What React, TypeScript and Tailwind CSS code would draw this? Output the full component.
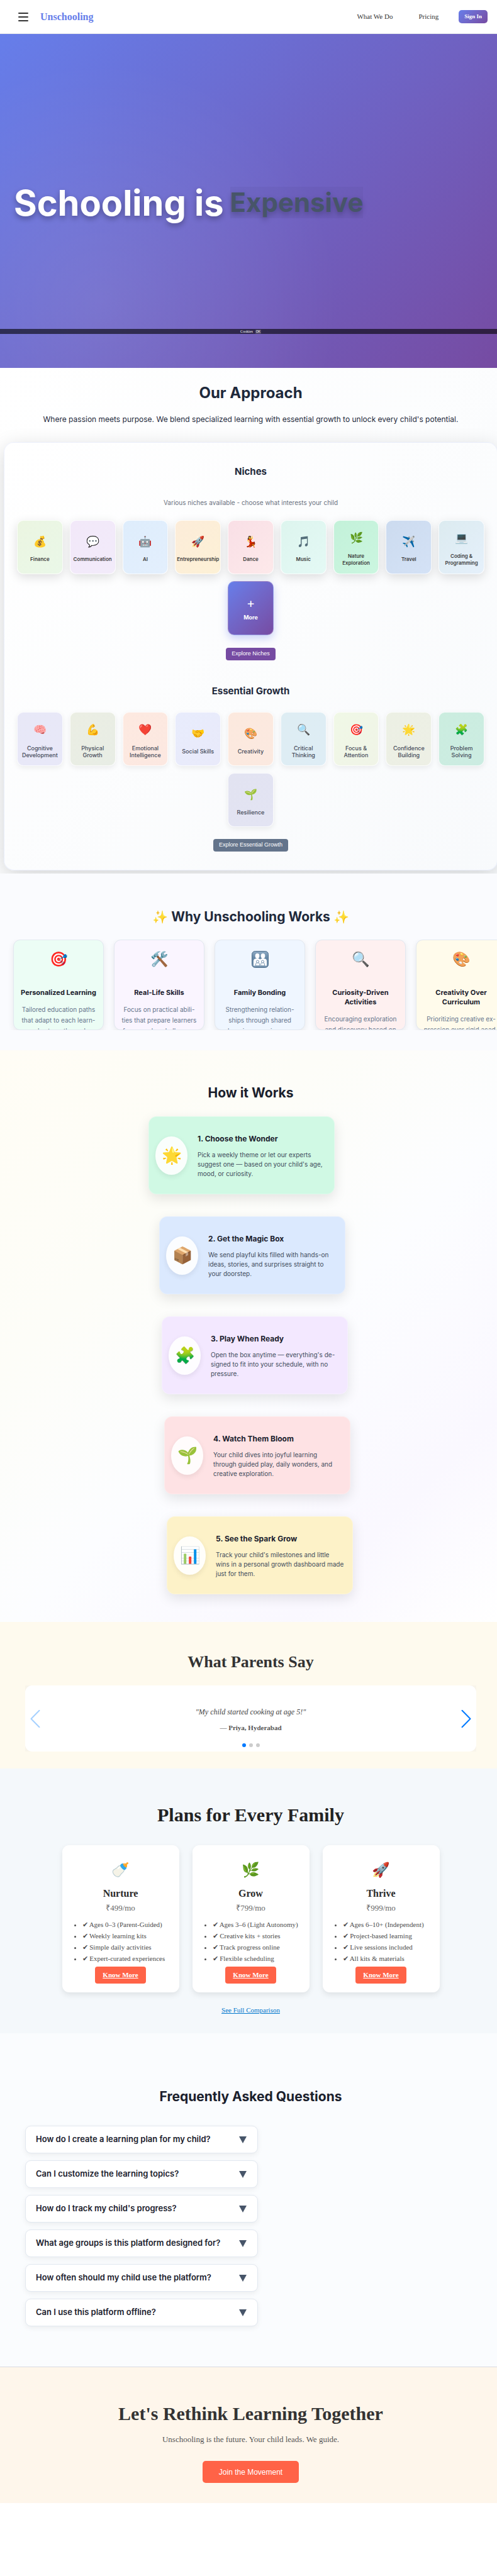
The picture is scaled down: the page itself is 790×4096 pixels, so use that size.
import { useState } from "react";
import type { ReactNode } from "react";

type Tile = { icon: string; label: string; bg: string };

const niches: Tile[] = [
  { icon: "💰", label: "Finance", bg: "from-[#ebf5e1] to-[#eaf8e8]" },
  { icon: "💬", label: "Communication", bg: "from-[#f2e8f9] to-[#f2ebfa]" },
  { icon: "🤖", label: "AI", bg: "from-[#deedfc] to-[#e3effd]" },
  { icon: "🚀", label: "Entrepreneurship", bg: "from-[#fcecd9] to-[#fdf1d6]" },
  { icon: "💃", label: "Dance", bg: "from-[#f9dfe6] to-[#fde9ea]" },
  { icon: "🎵", label: "Music", bg: "from-[#ddf5ee] to-[#e4f9f5]" },
  { icon: "🌿", label: "Nature\nExploration", bg: "from-[#c3f1d9] to-[#cbf6e0]" },
  { icon: "✈️", label: "Travel", bg: "from-[#ccdbef] to-[#d4e2f6]" },
  { icon: "💻", label: "Coding &\nProgramming", bg: "from-[#dcebf0] to-[#e5f0fb]" },
];

const growth: Tile[] = [
  { icon: "🧠", label: "Cognitive\nDevelopment", bg: "from-[#e8e8f7] to-[#e8e8f8]" },
  { icon: "💪", label: "Physical\nGrowth", bg: "from-[#ebeee3] to-[#e8ede5]" },
  { icon: "❤️", label: "Emotional\nIntelligence", bg: "from-[#fde9e0] to-[#fce8e1]" },
  { icon: "🤝", label: "Social Skills", bg: "from-[#e8ecfc] to-[#e9eafa]" },
  { icon: "🎨", label: "Creativity", bg: "from-[#fce9de] to-[#fbe9e0]" },
  { icon: "🔍", label: "Critical\nThinking", bg: "from-[#deedf3] to-[#deedf5]" },
  { icon: "🎯", label: "Focus &\nAttention", bg: "from-[#f0f8e6] to-[#f0f4e7]" },
  { icon: "🌟", label: "Confidence\nBuilding", bg: "from-[#ecf0e4] to-[#edefe5]" },
  { icon: "🧩", label: "Problem\nSolving", bg: "from-[#cbeddf] to-[#ccece2]" },
  { icon: "🌱", label: "Resilience", bg: "from-[#e2e3f1] to-[#e3e4f3]" },
];

function FamilyIcon() {
  return (
    <svg width="27" height="27" viewBox="0 0 27 27">
      <defs>
        <linearGradient id="family-tile" x1="0" y1="0" x2="0" y2="1">
          <stop offset="0" stopColor="#8fabc4" />
          <stop offset="0.4" stopColor="#6688a6" />
          <stop offset="1" stopColor="#7593ae" />
        </linearGradient>
      </defs>
      <rect x="0.5" y="0.5" width="26" height="26" rx="5" fill="url(#family-tile)" stroke="#52718d" />
      <g fill="#fff">
        <ellipse cx="9" cy="8" rx="3.4" ry="4" />
        <ellipse cx="18" cy="8" rx="3.4" ry="4" />
        <path d="M3 23.5V16c0-2.6 2-4 6-4 2.2 0 3.6.5 4.5 1.6C14.4 12.500 15.8 12 18 12c4 0 6 1.4 6 4v7.500z" />
      </g>
      <g fill="#fff" stroke="#6688a6" strokeWidth="0.9">
        <path d="M6.500 23.700v-2.500c0-1.600.9-2.400 3-2.400s3 .8 3 2.400v2.500zM14.500 23.700v-2.500c0-1.600.9-2.400 3-2.400s3 .8 3 2.400v2.500z" />
        <circle cx="9.500" cy="17" r="2" />
        <circle cx="17.500" cy="17" r="2" />
      </g>
    </svg>
  );
}

const reasons: { icon: ReactNode; title: string; text: string; bg: string }[] = [
  { icon: "🎯", title: "Personalized Learning", text: "Tailored education paths\nthat adapt to each learn-\ner's strengths and", bg: "bg-[#ecfdf5]" },
  { icon: "🛠️", title: "Real-Life Skills", text: "Focus on practical abili-\nties that prepare learners\nfor everyday challenges.", bg: "bg-[#faf5ff]" },
  { icon: <FamilyIcon />, title: "Family Bonding", text: "Strengthening relation-\nships through shared\nlearning experiences.", bg: "bg-[#eff6ff]" },
  { icon: "🔍", title: "Curiosity-Driven\nActivities", text: "Encouraging exploration\nand discovery based on", bg: "bg-[#fef0f0]" },
  { icon: "🎨", title: "Creativity Over\nCurriculum", text: "Prioritizing creative ex-\npression over rigid acad-", bg: "bg-[#fffbeb]" },
];

const steps = [
  { icon: "🌟", title: "1. Choose the Wonder", text: "Pick a weekly theme or let our experts\nsuggest one — based on your child's age,\nmood, or curiosity.", look: "bg-[#d0f9e4]" },
  { icon: "📦", title: "2. Get the Magic Box", text: "We send playful kits filled with hands-on\nideas, stories, and surprises straight to\nyour doorstep.", look: "ml-[17px] bg-[#dbe9fe]" },
  { icon: "🧩", title: "3. Play When Ready", text: "Open the box anytime — everything's de-\nsigned to fit into your schedule, with no\npressure.", look: "ml-[21px] bg-[#f3e8ff]" },
  { icon: "🌱", title: "4. Watch Them Bloom", text: "Your child dives into joyful learning\nthrough guided play, daily wonders, and\ncreative exploration.", look: "ml-[25px] bg-[#fee2e4]" },
  { icon: "📊", title: "5. See the Spark Grow", text: "Track your child's milestones and little\nwins in a personal growth dashboard made\njust for them.", look: "ml-[29px] bg-[#fdf2c8]" },
];

const plans = [
  { icon: "🍼", name: "Nurture", price: "₹499/mo", items: ["Ages 0–3 (Parent-Guided)", "Weekly learning kits", "Simple daily activities", "Expert-curated experiences"] },
  { icon: "🌿", name: "Grow", price: "₹799/mo", items: ["Ages 3–6 (Light Autonomy)", "Creative kits + stories", "Track progress online", "Flexible scheduling"] },
  { icon: "🚀", name: "Thrive", price: "₹999/mo", items: ["Ages 6–10+ (Independent)", "Project-based learning", "Live sessions included", "All kits & materials"] },
];

const questions = [
  "How do I create a learning plan for my child?",
  "Can I customize the learning topics?",
  "How do I track my child's progress?",
  "What age groups is this platform designed for?",
  "How often should my child use the platform?",
  "Can I use this platform offline?",
];

function Header() {
  return (
    <header className="flex h-[54px] items-center border-b border-gray-200 bg-white pr-[22px] pl-[29px] font-['Liberation_Serif',serif]">
      <button aria-label="Open menu" className="flex w-4 flex-col gap-[4px]">
        <span className="h-[2px] rounded-full bg-[#333]" />
        <span className="h-[2px] rounded-full bg-[#333]" />
        <span className="h-[2px] rounded-full bg-[#333]" />
      </button>
      <a href="#home" className="ml-[19px] text-[16px] leading-5 font-bold text-[#667eea]">Unschooling</a>
      <nav className="ml-auto flex items-center text-[11px] text-[#333]">
        <a href="#what">What We Do</a>
        <a href="#pricing" className="ml-[41px]">Pricing</a>
        <a href="#signin" className="ml-8 flex h-[21px] items-center rounded-[5px] bg-linear-135 from-[#667eea] to-[#764ba2] px-[9px] text-[9px] font-bold text-white">Sign In</a>
      </nav>
    </header>
  );
}

function Hero() {
  return (
    <section className="bg-[radial-gradient(circle_at_20%_80%,rgba(255,255,255,0.09),transparent_50%),linear-gradient(135deg,#667eea_0%,#764ba2_100%)]">
      <div className="flex h-[531px] flex-col">
        <h1 className="flex h-[469px] items-end gap-[10px] pl-[22px] text-[56px] leading-[64px] font-bold whitespace-nowrap text-white">
          <span className="pb-[168px] [text-shadow:0_4px_8px_rgba(0,0,0,0.3)]">Schooling is</span>
          <span className="mb-[176px] bg-black/[0.03] text-[42px] leading-[50px] text-[#475569] [text-shadow:0_4px_8px_rgba(0,0,0,0.25)]">Expensive</span>
        </h1>
        <div className="flex h-2 items-center justify-center gap-1 bg-black/60 font-['Liberation_Serif',serif] text-[6px] leading-none text-white">
          <span>Cookies</span>
          <button className="rounded-[1px] bg-white/15 px-[1px] font-['Liberation_Sans',sans-serif] text-[5px] leading-[7px]">OK</button>
        </div>
      </div>
    </section>
  );
}

function TileCard({ tile, strong }: { tile: Tile; strong: boolean }) {
  return (
    <div
      className={`flex h-[86px] flex-col items-center justify-center rounded-[10px] border border-white/80 bg-linear-135 ${tile.bg} ${
        strong ? "shadow-[0_5px_16px_rgba(0,0,0,0.13)]" : "shadow-[0_3px_8px_rgba(0,0,0,0.07)]"
      }`}
    >
      <span className="flex h-8 items-center text-[17px] leading-none">{tile.icon}</span>
      <span
        className={`mt-[7px] text-center leading-[11px] whitespace-pre ${
          strong ? "text-[8px] font-semibold text-[#3c3c3c]" : "text-[9px] font-medium text-[#434857]"
        }`}
      >
        {tile.label}
      </span>
    </div>
  );
}

function Approach() {
  return (
    <section className="overflow-hidden bg-linear-135 from-white to-[#f8fafc] pb-[5px] text-center text-[#1e293b]">
      <h2 className="pt-6 text-[24px] leading-8 font-bold">Our Approach</h2>
      <p className="mt-4 text-[12px] leading-5">
        Where passion meets purpose. We blend specialized learning with essential growth to unlock every child's potential.
      </p>
      <div className="mx-[6px] mt-[26px] rounded-[16px] border border-[#667eea]/10 bg-linear-135 from-white to-[#f8fafc] px-5 pb-[29px] shadow-[0_8px_32px_rgba(0,0,0,0.16)]">
        <h3 className="pt-[34px] text-[15px] leading-6 font-bold">Niches</h3>
        <p className="mt-[29px] text-[10px] leading-4 text-[#6b7280]">Various niches available - choose what interests your child</p>
        <div className="mt-5 grid grid-cols-9 gap-[11px]">
          {niches.map((t) => (
            <TileCard key={t.label} tile={t} strong />
          ))}
          <button className="col-start-5 flex h-[86px] flex-col items-center justify-center rounded-[10px] border border-white/30 bg-linear-135 from-[#667eea] to-[#764ba2] text-white shadow-[0_5px_14px_rgba(102,126,234,0.35)]">
            <span className="flex h-6 items-center text-[20px] leading-none font-normal">+</span>
            <span className="mt-[5px] text-[9px] leading-[11px] font-bold">More</span>
          </button>
        </div>
        <a href="#niches" className="mt-5 inline-flex h-5 items-center rounded-[4px] bg-[#764ba2] px-[9px] align-top font-['Liberation_Sans',sans-serif] text-[9px] text-white">
          Explore Niches
        </a>
        <h3 className="mt-[37px] text-[15px] leading-6 font-bold">Essential Growth</h3>
        <div className="mt-[21px] grid grid-cols-9 gap-[11px]">
          {growth.map((t, i) => (
            <div key={t.label} className={i === 9 ? "col-start-5" : ""}>
              <TileCard tile={t} strong={false} />
            </div>
          ))}
        </div>
        <a href="#growth" className="mt-[19px] inline-flex h-5 items-center rounded-[4px] bg-[#64748b] px-[9px] align-top font-['Liberation_Sans',sans-serif] text-[9px] text-white">
          Explore Essential Growth
        </a>
      </div>
    </section>
  );
}

function Why() {
  return (
    <section className="bg-[#fafbfe] pb-8">
      <h2 className="flex items-center justify-center gap-[5px] pt-[53px] text-[21px] leading-8 font-bold text-[#1e293b]">
        <span className="text-[20px]">✨</span>Why Unschooling Works<span className="text-[20px]">✨</span>
      </h2>
      <div className="mt-5 flex h-36 gap-4 overflow-hidden pl-[21px]">
        {reasons.map((r) => (
          <article
            key={r.title}
            className={`flex w-36 shrink-0 flex-col items-center overflow-hidden rounded-[11px] border border-[#e2e8f0] pt-[14px] text-center whitespace-pre shadow-[0_3px_10px_rgba(0,0,0,0.08)] ${r.bg}`}
          >
            <span className="flex h-8 shrink-0 items-center text-[23px] leading-none">{r.icon}</span>
            <h3 className="mt-[30px] text-[11px] leading-[15px] font-bold text-[#1a202c]">{r.title}</h3>
            <p className="mt-[11px] text-[10px] leading-[17px] text-[#64748b]">{r.text}</p>
          </article>
        ))}
      </div>
    </section>
  );
}

function HowItWorks() {
  return (
    <section className="bg-[linear-gradient(135deg,#fffdf5_0%,#fdfdf8_30%,#fcfdff_55%,#faf8ff_80%,#ffffff_100%)] pb-11">
      <h2 className="pt-[52px] text-center text-[21px] leading-8 font-bold text-[#1a202c]">How it Works</h2>
      <ol className="mx-auto mt-[21px] flex w-[325px] flex-col gap-[35px]">
        {steps.map((s) => (
          <li
            key={s.title}
            className={`flex h-[124px] w-[296px] items-center rounded-[13px] border border-white/30 pl-[10px] shadow-[0_7px_20px_rgba(0,0,0,0.1)] ${s.look}`}
          >
            <span className="flex h-[61px] w-[51px] shrink-0 items-center justify-center rounded-[50%] bg-white/90 text-[26px] leading-none shadow-[0_3px_8px_rgba(0,0,0,0.08)]">
              {s.icon}
            </span>
            <div className="ml-4 whitespace-pre">
              <h3 className="text-[12px] leading-5 font-bold text-[#1a202c]">{s.title}</h3>
              <p className="mt-2 text-[10px] leading-[15px] text-[#414c5c]">{s.text}</p>
            </div>
          </li>
        ))}
      </ol>
    </section>
  );
}

function Parents() {
  return (
    <section className="bg-[#fefaee] px-10 pb-[27px] text-center font-['Liberation_Serif',serif]">
      <h2 className="pt-12 text-[26px] leading-8 font-bold text-[#333]">What Parents Say</h2>
      <div className="mt-[21px] bg-[#f8f4ea]">
        <div className="relative h-[105px] rounded-[11px] bg-white">
          <button aria-label="Previous" className="absolute top-1/2 left-2 -translate-y-1/2">
            <svg width="16" height="29" viewBox="0 0 16 29" fill="none" stroke="#007aff" strokeOpacity="0.35" strokeWidth="2" strokeLinecap="round" strokeLinejoin="round">
              <path d="M14.5 1.2 1.5 14.5l13 13.3" />
            </svg>
          </button>
          <button aria-label="Next" className="absolute top-1/2 right-2 -translate-y-1/2">
            <svg width="16" height="29" viewBox="0 0 16 29" fill="none" stroke="#007aff" strokeWidth="2" strokeLinecap="round" strokeLinejoin="round">
              <path d="m1.5 1.2 13 13.3-13 13.3" />
            </svg>
          </button>
          <p className="pt-[34px] text-[12px] leading-4 text-[#444] italic">"My child started cooking at age 5!"</p>
          <p className="mt-[9px] text-[11px] leading-4 font-bold text-[#555]">— Priya, Hyderabad</p>
          <div className="mt-[17px] flex justify-center gap-[5px]">
            <span className="size-[6px] rounded-full bg-[#007aff]" />
            <span className="size-[6px] rounded-full bg-[#ccc]" />
            <span className="size-[6px] rounded-full bg-[#ccc]" />
          </div>
        </div>
      </div>
    </section>
  );
}

function Plans() {
  return (
    <section className="bg-[#f4f8fb] pb-[29px] text-center font-['Liberation_Serif',serif]">
      <h2 className="pt-14 text-[30px] leading-9 font-bold text-[#222]">Plans for Every Family</h2>
      <div className="mt-[30px] flex justify-center gap-[21px]">
        {plans.map((p) => (
          <article key={p.name} className="flex w-[186px] flex-col items-center rounded-[11px] bg-white pt-[23px] pb-[14px] shadow-[0_4px_10px_rgba(0,0,0,0.09)]">
            <span className="flex h-8 items-center text-[23px] leading-none">{p.icon}</span>
            <h3 className="mt-3 text-[16px] leading-5 font-bold text-[#2b2b2b]">{p.name}</h3>
            <p className="mt-[5px] text-[13px] leading-4 text-[#666]">{p.price}</p>
            <ul className="mt-[9px] w-full list-disc pl-8 text-left text-[11px] leading-[18px] whitespace-nowrap text-[#4d4d4d]">
              {p.items.map((item) => (
                <li key={item}>✔ {item}</li>
              ))}
            </ul>
            <a href="#plan" className="mt-1 flex h-[27px] items-center rounded-[4px] bg-[#ff6347] px-3 text-[11px] font-bold text-white underline">
              Know More
            </a>
          </article>
        ))}
      </div>
      <a href="#compare" className="mt-5 inline-block align-top text-[11px] leading-4 text-[#0077cc] underline">See Full Comparison</a>
    </section>
  );
}

function Faq() {
  const [open, setOpen] = useState(-1);
  return (
    <section className="border-b border-[#d9dae3] bg-[#fafcfe] px-10 pb-16">
      <h2 className="pt-[85px] text-center text-[21px] leading-8 font-bold text-[#1a202c]">Frequently Asked Questions</h2>
      <div className="mt-[30px] flex max-w-[370px] flex-col gap-[11px]">
        {questions.map((q, i) => (
          <button
            key={q}
            aria-expanded={open === i}
            onClick={() => setOpen(open === i ? -1 : i)}
            className="flex h-11 items-center justify-between rounded-[9px] border border-[#e2e8f0] bg-white pr-[17px] pl-4 text-left text-[13px] font-semibold text-[#1a202c] shadow-[0_3px_8px_rgba(0,0,0,0.06)]"
          >
            {q}
            <svg width="12" height="11" viewBox="0 0 12 11" fill="#475569">
              <path d="M0 0h12L6 11z" />
            </svg>
          </button>
        ))}
      </div>
    </section>
  );
}

function CallToAction() {
  return (
    <section className="bg-[#fef6eb] pb-8 text-center font-['Liberation_Serif',serif]">
      <h2 className="pt-14 text-[30px] leading-9 font-bold text-[#333]">Let's Rethink Learning Together</h2>
      <p className="mt-[13px] text-[13px] leading-5 text-[#555]">Unschooling is the future. Your child leads. We guide.</p>
      <button className="mt-6 h-[35px] rounded-[5px] bg-[#ff6347] px-[26px] align-top font-['Liberation_Sans',sans-serif] text-[12px] text-white">
        Join the Movement
      </button>
    </section>
  );
}

export default function App() {
  return (
    <div className="overflow-x-hidden bg-white font-['Inter',sans-serif]">
      <div className="-mr-[7px] pb-[116px]">
        <Header />
        <Hero />
        <Approach />
        <Why />
        <HowItWorks />
        <Parents />
        <Plans />
        <Faq />
        <CallToAction />
      </div>
    </div>
  );
}
